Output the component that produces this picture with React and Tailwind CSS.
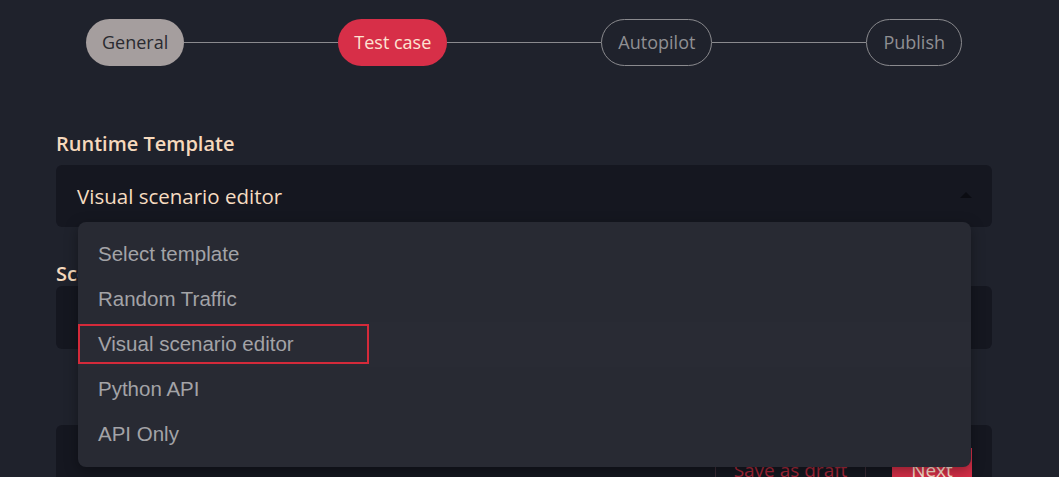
import React from 'react';

const steps = [
  { label: 'General', state: 'done' },
  { label: 'Test case', state: 'active' },
  { label: 'Autopilot', state: 'todo' },
  { label: 'Publish', state: 'todo' },
];

const options = ['Select template', 'Random Traffic', 'Visual scenario editor', 'Python API', 'API Only'];

const Pill = ({ label, state }) => {
  const styles =
    state === 'done'
      ? 'bg-[#a59e9e] text-[#2a2a30]'
      : state === 'active'
      ? 'bg-[#d72f48] text-[#fde3d2]'
      : 'border border-[#8a8a8e] text-[#8f8f93]';
  return (
    <div className={`h-[47px] shrink-0 rounded-full px-[16px] flex items-center text-[18px] ${styles}`}>
      {label}
    </div>
  );
};

const App = () => {
  return (
    <div
      className="h-[477px] w-full overflow-hidden bg-[#1f222c] pl-14 pr-[67px] pt-[19px]"
      style={{ fontFamily: '"Open Sans", "Noto Sans", sans-serif' }}
    >
      {/* Stepper */}
      <div className="mx-[30px] flex items-center">
        {steps.map((s, i) => (
          <React.Fragment key={s.label}>
            <Pill {...s} />
            {i < steps.length - 1 && <div className="h-px flex-1 bg-[#8a8a8e]" />}
          </React.Fragment>
        ))}
      </div>

      {/* Runtime template */}
      <div className="mt-[66px] mb-[9px] text-[20px] font-semibold leading-6 text-[#f6d9bd]">Runtime Template</div>
      <div className="relative">
        <div className="flex h-[62px] items-center rounded-md bg-[#151720] pl-[21px] pr-5">
          <span className="flex-1 text-[20.5px] text-[#f6dcc0]">Visual scenario editor</span>
          <span className="mt-[-2px] h-0 w-0 border-x-[6px] border-b-[6px] border-x-transparent border-b-[#0b0c12]" />
        </div>

        {/* Dropdown */}
        <div
          className="absolute left-[22px] top-[57px] z-10 w-[893px] rounded-lg bg-[#282a33] py-[10px] shadow-[0_4px_14px_rgba(0,0,0,0.35)]"
          style={{ fontFamily: '"Liberation Sans", Arial, sans-serif' }}
        >
          {options.map((o, i) => (
            <div
              key={o}
              className={`relative flex h-[45px] items-center pl-5 text-[20.5px] text-[#a3a3a7] ${i === 2 ? 'bg-[#292b34]' : ''}`}
            >
              {o}
              {i === 2 && (
                <div className="absolute left-0 top-[2px] h-[40px] w-[291px] border-2 border-[#d42a3a]" />
              )}
            </div>
          ))}
        </div>
      </div>

      {/* Scenario */}
      <div className="mt-[35px] text-[20px] font-semibold leading-6 text-[#f6d9bd]">Scenario</div>
      <div className="h-[63px] rounded-md bg-[#151720]" />

      {/* Footer actions */}
      <div className="mt-[76px] flex h-[80px] items-start justify-end gap-[26px] rounded-md bg-[#151720] pr-5 pt-[23px]">
        <button className="flex h-[44px] w-[151px] items-center justify-center border-x border-[#3b2b35] text-[19px] text-[#a8283a]">
          Save as draft
        </button>
        <button className="flex h-[44px] w-[80px] items-center justify-center bg-[#d72f48] text-[19px] text-[#fde3d2]">
          Next
        </button>
      </div>
    </div>
  );
};

export default App;
